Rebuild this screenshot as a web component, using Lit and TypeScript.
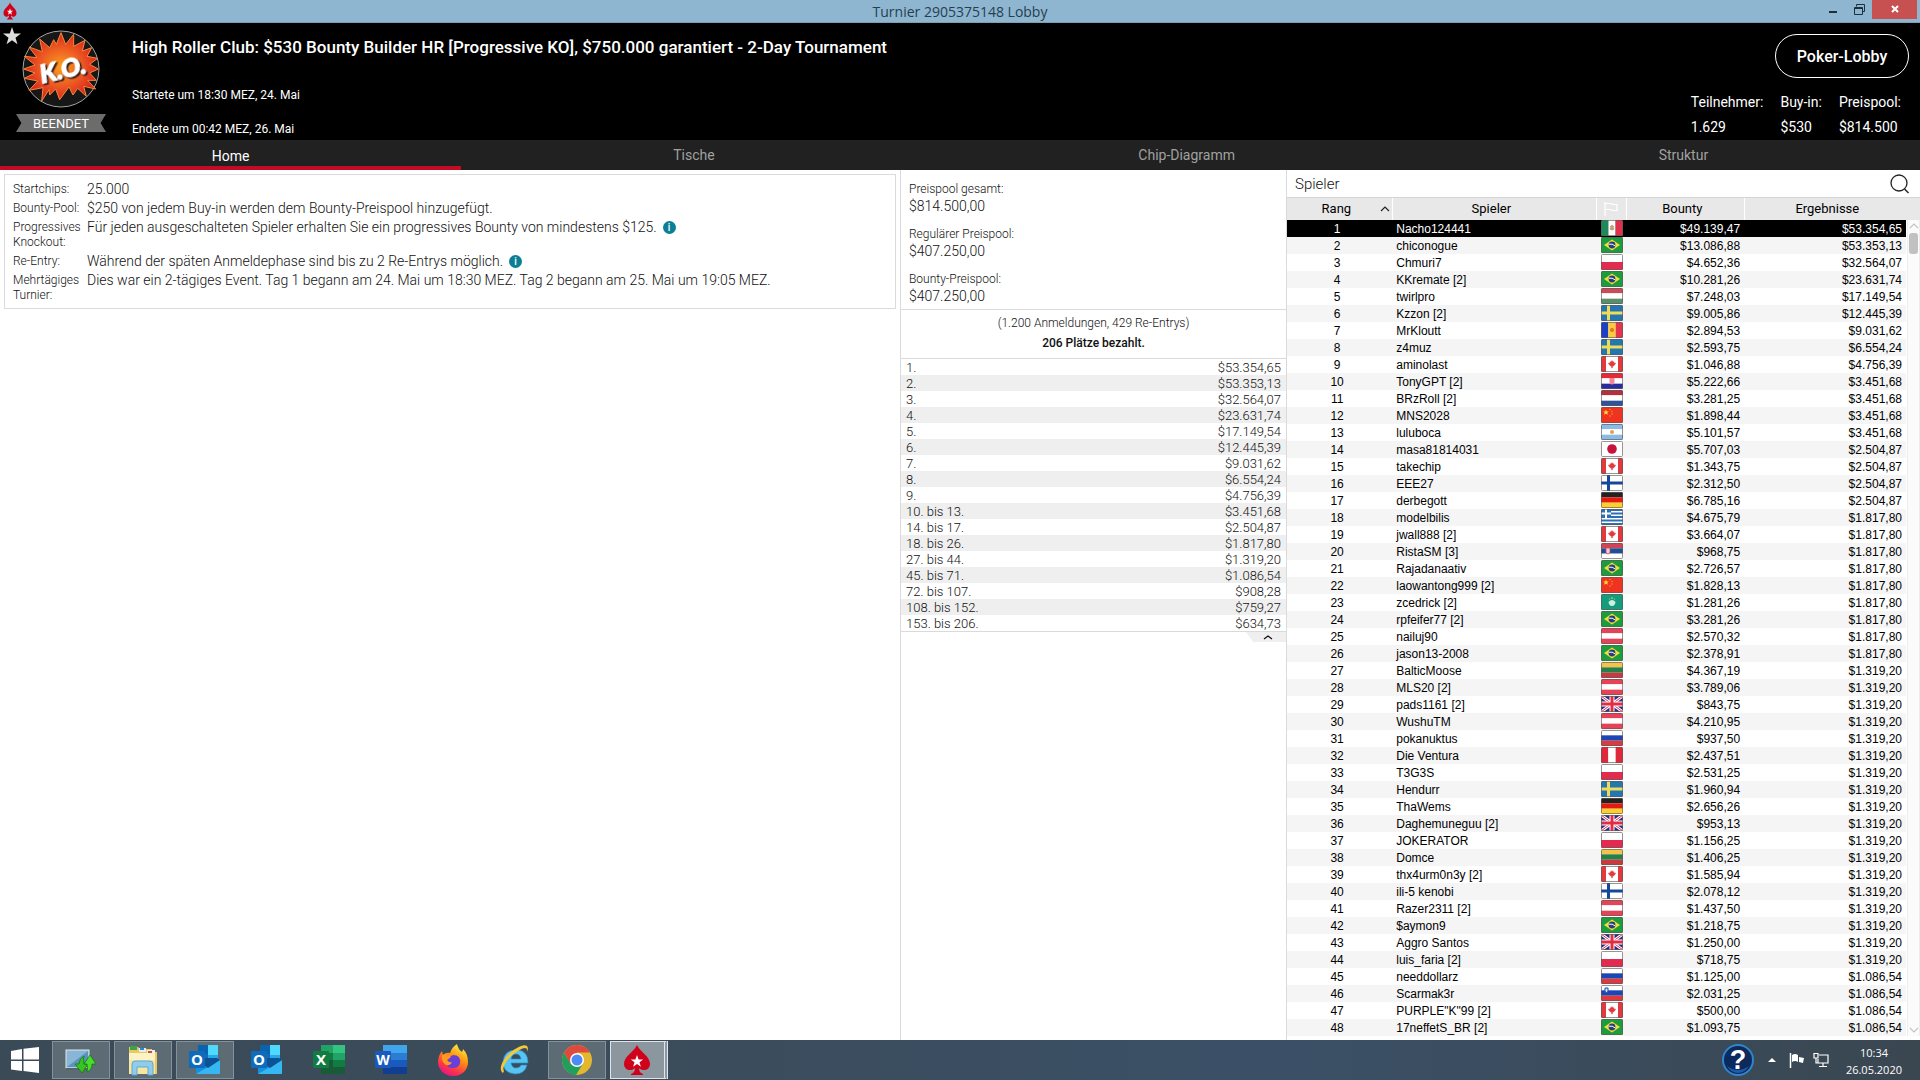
import { LitElement, html, svg, css, nothing } from "lit";
import { customElement, property, state } from "lit/decorators.js";
import { classMap } from "lit/directives/class-map.js";

type Player = [name: string, flag: string, bounty: string, result: string];

const PLAYERS: Player[] = [
  ["Nacho124441", "mx", "$49.139,47", "$53.354,65"],
  ["chiconogue", "br", "$13.086,88", "$53.353,13"],
  ["Chmuri7", "pl", "$4.652,36", "$32.564,07"],
  ["KKremate [2]", "br", "$10.281,26", "$23.631,74"],
  ["twirlpro", "hu", "$7.248,03", "$17.149,54"],
  ["Kzzon [2]", "se", "$9.005,86", "$12.445,39"],
  ["MrKloutt", "md", "$2.894,53", "$9.031,62"],
  ["z4muz", "se", "$2.593,75", "$6.554,24"],
  ["aminolast", "ca", "$1.046,88", "$4.756,39"],
  ["TonyGPT [2]", "hr", "$5.222,66", "$3.451,68"],
  ["BRzRoll [2]", "nl", "$3.281,25", "$3.451,68"],
  ["MNS2028", "cn", "$1.898,44", "$3.451,68"],
  ["luluboca", "ar", "$5.101,57", "$3.451,68"],
  ["masa81814031", "jp", "$5.707,03", "$2.504,87"],
  ["takechip", "ca", "$1.343,75", "$2.504,87"],
  ["EEE27", "fi", "$2.312,50", "$2.504,87"],
  ["derbegott", "de", "$6.785,16", "$2.504,87"],
  ["modelbilis", "gr", "$4.675,79", "$1.817,80"],
  ["jwall888 [2]", "ca", "$3.664,07", "$1.817,80"],
  ["RistaSM [3]", "rs", "$968,75", "$1.817,80"],
  ["Rajadanaativ", "br", "$2.726,57", "$1.817,80"],
  ["laowantong999 [2]", "cn", "$1.828,13", "$1.817,80"],
  ["zcedrick [2]", "mo", "$1.281,26", "$1.817,80"],
  ["rpfeifer77 [2]", "br", "$3.281,26", "$1.817,80"],
  ["nailuj90", "at", "$2.570,32", "$1.817,80"],
  ["jason13-2008", "br", "$2.378,91", "$1.817,80"],
  ["BalticMoose", "lt", "$4.367,19", "$1.319,20"],
  ["MLS20 [2]", "at", "$3.789,06", "$1.319,20"],
  ["pads1161 [2]", "gb", "$843,75", "$1.319,20"],
  ["WushuTM", "at", "$4.210,95", "$1.319,20"],
  ["pokanuktus", "ru", "$937,50", "$1.319,20"],
  ["Die Ventura", "pe", "$2.437,51", "$1.319,20"],
  ["T3G3S", "pl", "$2.531,25", "$1.319,20"],
  ["Hendurr", "se", "$1.960,94", "$1.319,20"],
  ["ThaWems", "de", "$2.656,26", "$1.319,20"],
  ["Daghemuneguu [2]", "gb", "$953,13", "$1.319,20"],
  ["JOKERATOR", "pl", "$1.156,25", "$1.319,20"],
  ["Domce", "lt", "$1.406,25", "$1.319,20"],
  ["thx4urm0n3y [2]", "ca", "$1.585,94", "$1.319,20"],
  ["ili-5 kenobi", "fi", "$2.078,12", "$1.319,20"],
  ["Razer2311 [2]", "at", "$1.437,50", "$1.319,20"],
  ["$aymon9", "br", "$1.218,75", "$1.319,20"],
  ["Aggro Santos", "gb", "$1.250,00", "$1.319,20"],
  ["luis_faria [2]", "pl", "$718,75", "$1.319,20"],
  ["needdollarz", "ru", "$1.125,00", "$1.086,54"],
  ["Scarmak3r", "si", "$2.031,25", "$1.086,54"],
  ['PURPLE"K"99 [2]', "ca", "$500,00", "$1.086,54"],
  ["17neffetS_BR [2]", "br", "$1.093,75", "$1.086,54"],
];

const PAYOUTS: [string, string][] = [
  ["1.", "$53.354,65"],
  ["2.", "$53.353,13"],
  ["3.", "$32.564,07"],
  ["4.", "$23.631,74"],
  ["5.", "$17.149,54"],
  ["6.", "$12.445,39"],
  ["7.", "$9.031,62"],
  ["8.", "$6.554,24"],
  ["9.", "$4.756,39"],
  ["10. bis 13.", "$3.451,68"],
  ["14. bis 17.", "$2.504,87"],
  ["18. bis 26.", "$1.817,80"],
  ["27. bis 44.", "$1.319,20"],
  ["45. bis 71.", "$1.086,54"],
  ["72. bis 107.", "$908,28"],
  ["108. bis 152.", "$759,27"],
  ["153. bis 206.", "$634,73"],
];

const FACTS: [label: string, text: string, info: boolean][] = [
  ["Startchips:", "25.000", false],
  ["Bounty-Pool:", "$250 von jedem Buy-in werden dem Bounty-Preispool hinzugefügt.", false],
  ["Progressives Knockout:", "Für jeden ausgeschalteten Spieler erhalten Sie ein progressives Bounty von mindestens $125.", true],
  ["Re-Entry:", "Während der späten Anmeldephase sind bis zu 2 Re-Entrys möglich.", true],
  ["Mehrtägiges Turnier:", "Dies war ein 2-tägiges Event. Tag 1 begann am 24. Mai um 18:30 MEZ. Tag 2 begann am 25. Mai um 19:05 MEZ.", false],
];

/* ---- flags, drawn on a 22 x 16 field ---- */

const rows = (...c: string[]) =>
  c.map((fill, i) => svg`<rect x="0" y=${(16 / c.length) * i} width="22" height=${16 / c.length} fill=${fill} />`);
const cols = (...c: string[]) =>
  c.map((fill, i) => svg`<rect x=${(22 / c.length) * i} y="0" width=${22 / c.length} height="16" fill=${fill} />`);
const field = (fill: string) => svg`<rect width="22" height="16" fill=${fill} />`;

const FLAGS: Record<string, unknown> = {
  mx: svg`${cols("#1d8a5c", "#fff", "#e0304a")}<path d="M9 8a2 2 0 0 0 4 0M9 7l2-2 2 2-2 1z" fill="#c2a57b" stroke="#a98a5c" stroke-width=".6" />`,
  br: svg`${field("#1d9c3d")}<path d="M11 2.500 19 8l-8 5.500L3 8z" fill="#f4dc3a" /><circle cx="11" cy="8" r="3.400" fill="#24407c" /><path d="M7.800 7.200q3.500-.8 6.300 1.700" stroke="#fff" fill="none" />`,
  pl: rows("#fff", "#e32b50"),
  hu: rows("#cd4a5a", "#fff", "#5a9069"),
  se: svg`${field("#2477ae")}<path d="M7.500 0v16M0 8h22" stroke="#f1da5a" stroke-width="3" />`,
  md: svg`${cols("#1c3fc4", "#fccb3c", "#e2344c")}<circle cx="11" cy="8" r="2" fill="#d8742c" />`,
  ca: svg`${field("#fff")}<rect width="5" height="16" fill="#e03a3e" /><rect x="17" width="5" height="16" fill="#e03a3e" /><path d="m11 4.500 1 1.600 1-.4-.2 1.500 1.700-.2-.5 1.500-2 1.700h-.7V12h-.6v-1.800H10L8 8.500 7.500 7l1.700.2L9 5.700l1 .4z" fill="#e03a3e" stroke="#e03a3e" stroke-width=".5" />`,
  hr: svg`${rows("#e32a36", "#fff", "#2a2c9c")}<path d="M8.500 5h5v4q0 2.500-2.500 2.500T8.500 9z" fill="#f0889c" />`,
  nl: rows("#b5303f", "#fff", "#2f549c"),
  cn: svg`${field("#ee3420")}<path d="m5 2.500.8 1.900 2 .1-1.500 1.300.5 2L5 6.700 3.200 7.800l.5-2-1.500-1.300 2-.1z" fill="#fcd832" /><g fill="#f7a52b"><circle cx="9" cy="2.500" r=".7" /><circle cx="11" cy="4.500" r=".7" /><circle cx="11" cy="7" r=".7" /><circle cx="9" cy="9" r=".7" /></g>`,
  ar: svg`${rows("#8cbce6", "#fff", "#8cbce6")}<circle cx="11" cy="8" r="2" fill="#e5a14a" />`,
  jp: svg`${field("#fff")}<circle cx="11" cy="8" r="4.800" fill="#c8143c" />`,
  fi: svg`${field("#fff")}<path d="M7.500 0v16M0 8h22" stroke="#14489c" stroke-width="3" />`,
  de: rows("#222", "#e01c10", "#fcd02c"),
  gr: svg`${field("#fff")}<path d="M0 1h22M0 4.500h22M0 8h22M0 11.500h22M0 15h22" stroke="#2c70b4" stroke-width="1.800" /><rect width="10" height="9" fill="#2c70b4" /><path d="M5 0v9M0 4.500h10" stroke="#fff" stroke-width="2" />`,
  rs: svg`${rows("#cf4456", "#1f4e94", "#fff")}<path d="M5 5h4v4q0 2-2 2T5 9z" fill="#e4d4dc" stroke="#cf4456" stroke-width=".8" />`,
  mo: svg`${field("#159c7c")}<path d="M7.500 8q3.500-4 7 0-.5 4-3.500 4T7.500 8z" fill="#d2eee4" /><circle cx="11" cy="4" r=".8" fill="#e8e070" /><circle cx="8.500" cy="5" r=".5" fill="#e8e070" /><circle cx="13.500" cy="5" r=".5" fill="#e8e070" />`,
  at: rows("#e54458", "#fff", "#e54458"),
  lt: rows("#f5c24a", "#26804a", "#c83a40"),
  gb: svg`${field("#2c2b86")}<path d="m0 0 22 16M22 0 0 16" stroke="#fff" stroke-width="3" /><path d="m0 0 22 16M22 0 0 16" stroke="#e22c44" stroke-width="1" /><path d="M11 0v16M0 8h22" stroke="#fff" stroke-width="5" /><path d="M11 0v16M0 8h22" stroke="#e22c44" stroke-width="3" />`,
  ru: rows("#fff", "#1c46b4", "#dc3a3c"),
  pe: cols("#e0283c", "#fff", "#e0283c"),
  si: svg`${rows("#fff", "#1c46b4", "#dc3a3c")}<path d="M4 3h3v3q0 1.500-1.500 1.500T4 6z" fill="#dce8f8" stroke="#1c46b4" />`,
};

@customElement("country-flag")
export class CountryFlag extends LitElement {
  @property() code = "";

  static styles = css`
    :host { display: block; width: 22px; height: 16px; margin: 0 auto; }
    .flag { display: block; width: 22px; height: 16px; }
    .edge { fill: none; stroke: #5f5a5a; stroke-opacity: 0.65; }
  `;

  render() {
    return html`<svg class="flag" viewBox="0 0 22 16" aria-hidden="true">
      <clipPath id="r"><rect width="22" height="16" rx="1.500" /></clipPath>
      <g clip-path="url(#r)">${FLAGS[this.code] ?? nothing}</g>
      <rect class="edge" x=".5" y=".5" width="21" height="15" rx="1" />
    </svg>`;
  }
}

/* ---- icons ---- */

const SPADE = svg`<path d="M16 1C13 8 3 12 3 20c0 6 7 8 11 4 0 3-1 5-4 6v1h12v-1c-3-1-4-3-4-6 4 4 11 2 11-4 0-8-10-12-13-19z" fill="#d0021b" /><path d="m16 11 1.600 4.400h4.600l-3.700 2.800 1.400 4.500-3.900-2.700-3.900 2.700 1.400-4.500-3.700-2.800h4.600z" fill="#fff" />`;

const outlook = svg`
  <rect x="9" y="1" width="20" height="19" fill="#0f6cbd" /><rect x="19" y="1" width="10" height="10" fill="#50d9ff" /><rect x="9" y="1" width="10" height="9" fill="#0a64ad" /><rect x="19" y="11" width="10" height="9" fill="#28a8ea" />
  <path d="M7 17 31 17v12q0 1-1 1H8q-1 0-1-1z" fill="#1490df" /><path d="M7 30 31 16v13q0 1-1 1z" fill="#35b8f1" /><path d="m7 16 12 8 12-8-3-2H9z" fill="#0c5396" />
  <rect x="0" y="7" width="16" height="17" rx="1" fill="#0f6cbd" /><text class="glyph" x="8" y="21" font-size="15">O</text>`;

const TASKS: { name: string; state: string; art: unknown }[] = [
  {
    name: "Dateisynchronisierung", state: "open",
    art: svg`<rect x="1" y="6" width="23" height="18" fill="#88b6d4" stroke="#dde8ee" /><path d="M2 23 23 7v16z" fill="#5b93bc" /><rect x="1" y="24" width="23" height="2" fill="#56636d" /><path d="M10 20h4q0-5 5-8-1 3 0 8h4l-6 9z" fill="#36c422" stroke="#147a10" stroke-width=".8" /><path d="m25 11 6 9h-4q0 6-5 8 1-3 0-8h-3z" fill="#4cdc30" stroke="#147a10" stroke-width=".8" />`,
  },
  {
    name: "Explorer", state: "open",
    art: svg`<path d="M2 3h9l2 2h12v3h5v22H2z" fill="#e9c866" /><path d="M3 2h7v4H3z" fill="#3ba547" /><path d="M12 4h7v4h-7z" fill="#e9eef2" /><path d="M13 4h4v2h-4z" fill="#2789d0" /><path d="M20 6h8v4h-8z" fill="#eee" /><path d="M21 7h4v2h-4z" fill="#d3483c" /><path d="M2 9h26v21H2z" fill="#f8e6a0" /><path d="M2 9h26v7H2z" fill="#fdf2c2" /><path d="M5 31V20q0-3 3-3h15q3 0 3 3v11h-5v-8H10v8z" fill="#90cdec" stroke="#5ba8d4" />`,
  },
  { name: "Outlook", state: "open", art: outlook },
  { name: "Outlook-Kalender", state: "", art: outlook },
  {
    name: "Excel", state: "",
    art: svg`<path d="M8 1h12v8H8z" fill="#21a366" /><path d="M20 1h12v8H20z" fill="#33c481" /><path d="M8 9h12v7H8z" fill="#107c41" /><path d="M20 9h12v7H20z" fill="#21a366" /><path d="M8 16h12v14H8z" fill="#185c37" /><path d="M20 16h12v7H20z" fill="#107c41" /><path d="M20 23h12v7H20z" fill="#185c37" /><rect y="7" width="16" height="17" rx="1" fill="#107c41" /><text class="glyph" x="8" y="21" font-size="15">X</text>`,
  },
  {
    name: "Word", state: "",
    art: svg`<path d="M8 1h24v8H8z" fill="#41a5ee" /><path d="M8 9h24v7H8z" fill="#2b7cd3" /><path d="M8 16h24v7H8z" fill="#185abd" /><path d="M8 23h24v7H8z" fill="#103f91" /><rect y="7" width="16" height="17" rx="1" fill="#185abd" /><text class="glyph" x="8" y="21" font-size="14">W</text>`,
  },
  {
    name: "Firefox", state: "",
    art: svg`<defs><linearGradient id="ff" x1=".8" y1="0" x2=".3" y2="1"><stop offset="0" stop-color="#fff44f" /><stop offset=".4" stop-color="#ff980e" /><stop offset=".75" stop-color="#ff3647" /><stop offset="1" stop-color="#e31587" /></linearGradient></defs>
      <path d="M20 0q1 5 5 8 1-2 1-3 5 5 5 13c0 8-6 14-15 14S1 25 1 18q0-6 4-11l1 4q3-3 7-2 2-6 7-9z" fill="url(#ff)" /><path d="M16 11q8 0 7 8-1 5-7 5t-7-5q0-5 7-8z" fill="#6a3fd8" /><path d="M5 11q5-2 9 2l-4 3q2 3 5 2-2 4-6 3-5-3-4-10z" fill="#ff9b1c" />`,
  },
  {
    name: "Internet Explorer", state: "",
    art: svg`<path d="M29 19H12q1 5 5 5 4 0 5-3h6q-2 9-12 9Q4 29 4 18 5 6 17 6q12 0 12 13zM12 15h10q-1-5-5-5t-5 5z" fill="#58c4f2" stroke="#2a8fd0" stroke-width=".7" /><path d="M4 29C-3 24 8 9 18 4c8-5 13-3 10 4 1-5-3-5-9-1C10 12 2 23 5 27z" fill="#f5c83a" />`,
  },
  {
    name: "Chrome", state: "open",
    art: svg`<circle cx="16" cy="16" r="15" fill="#e3b82f" /><path d="M16 16 3 8.500A15 15 0 0 1 29 8.500H16z" fill="#dc4b3e" /><path d="M3 8.500 9.700 20 16 22.500 15 31A15 15 0 0 1 3 8.500z" fill="#1f9f5b" /><path d="M3 8.500 9.500 20l6-12z" fill="#dc4b3e" /><path d="m22 19.500-7 11.500-1-9z" fill="#1f9f5b" /><circle cx="16" cy="16" r="7" fill="#fff" /><circle cx="16" cy="16" r="5.500" fill="#4c8bf5" />`,
  },
  { name: "PokerStars", state: "active", art: SPADE },
];

@customElement("window-titlebar")
export class WindowTitlebar extends LitElement {
  static styles = css`
    :host { display: block; font-family: "Open Sans", "Noto Sans", sans-serif; }
    .bar { display: grid; grid-template-columns: 1fr auto 1fr; height: 23px; background: #8fb6d0; border-bottom: 1px solid #7d9fb6; box-sizing: border-box; }
    .mark { display: block; width: 16px; height: 18px; margin: 2px; }
    .title { margin: 0; font-size: 14px; font-weight: 400; line-height: 23px; color: #24404f; }
    .controls { display: flex; justify-content: flex-end; padding-right: 3px; }
    .ctl { display: flex; align-items: center; justify-content: center; box-sizing: border-box; width: 26px; height: 19px; padding: 0 0 2px; border: 0; background: none; }
    .close { width: 45px; background: #c75050; }
    .ctl svg { display: block; width: 12px; height: 12px; }
  `;

  render() {
    return html`<div class="bar">
      <svg class="mark" viewBox="0 0 32 32" preserveAspectRatio="none" aria-hidden="true">${SPADE}</svg>
      <h1 class="title">Turnier 2905375148 Lobby</h1>
      <div class="controls">
        <button class="ctl" aria-label="Minimieren"><svg viewBox="0 0 12 12"><path d="M2 8h8v2H2z" fill="#1c2f3a" /></svg></button>
        <button class="ctl" aria-label="Wiederherstellen"><svg viewBox="0 0 12 12"><path d="M3.500 3.500v-2h8v7h-2M1.500 4.500h8v7h-8zM1.500 5.500h8" fill="none" stroke="#1c2f3a" /></svg></button>
        <button class="ctl close" aria-label="Schließen"><svg viewBox="0 0 12 12"><path d="m3 3 6 6m0-6L3 9" stroke="#fff" stroke-width="2" /></svg></button>
      </div>
    </div>`;
  }
}

@customElement("tournament-header")
export class TournamentHeader extends LitElement {
  static styles = css`
    :host { display: block; }
    .head { position: relative; display: flex; height: 117px; background: #000; color: #fff; }
    .star { position: absolute; left: 3px; top: 4px; width: 18px; height: 18px; padding: 0; border: 0; background: none; }
    .star svg { display: block; width: 18px; height: 18px; }
    .badge { display: flex; flex-direction: column; align-items: center; gap: 6px; width: 90px; padding: 7px 26px 0 16px; }
    .logo { width: 78px; height: 78px; display: block; }
    .ko { font: italic 900 76px "Lato", "Open Sans", sans-serif; fill: #fff; stroke: #fff; stroke-width: 4px; filter: drop-shadow(4px 5px 0 #2a1414); }
    .ribbon { width: 90px; height: 18px; background: #6c6c6c; clip-path: polygon(0 0, 100% 0, 94% 50%, 100% 100%, 0 100%, 6% 50%); font-size: 13px; line-height: 19px; text-align: center; }
    .info { flex: 1; display: flex; flex-direction: column; padding-top: 12px; }
    .name { margin: 0 0 24px; font-size: 17px; font-weight: 500; line-height: 24px; }
    .when { margin: 0 0 10px; font-size: 12px; line-height: 24px; }
    .side { display: flex; flex-direction: column; align-items: flex-end; padding: 11px 11px 0 0; }
    .lobby { width: 134px; height: 44px; border: 1px solid #fff; border-radius: 22px; background: #000; color: #fff; font: 500 16px Roboto, sans-serif; }
    .stats { display: flex; gap: 17px; margin: 12px 8px 0 0; font-size: 14px; line-height: 25px; }
    .stats dt, .stats dd { margin: 0; }
  `;

  render() {
    return html`<header class="head">
      <button class="star" aria-label="Favorit"><svg viewBox="0 0 18 18"><path d="m9 0 2.200 6.500H18l-5.500 4.200 2 6.600L9 13.300l-5.500 4 2-6.600L0 6.500h6.800z" fill="#ddd" /></svg></button>
      <div class="badge">
        <svg class="logo" viewBox="65 91 234 234" aria-label="K.O.">
          <defs><radialGradient id="boom"><stop offset="0" stop-color="#fb9f1e" /><stop offset=".5" stop-color="#ee6222" /><stop offset="1" stop-color="#dc2420" /></radialGradient></defs>
          <circle cx="182" cy="208" r="114" fill="#171717" stroke="#a4a4a4" stroke-width="3" />
          <path d="M182 99 196 134 220 104 220 140 254 122 246 154 274 144 260 170 292 176 268 194 294 208 268 220 288 242 262 242 286 268 250 260 258 290 232 266 218 286 206 262 178 300 166 268 148 286 146 270 124 304 128 264 86 272 112 244 72 236 104 220 70 208 104 196 72 170 110 174 86 142 126 156 118 118 148 144 160 120 168 134z" fill="url(#boom)" stroke="#f48a34" stroke-width="3" />
          <text class="ko" x="117" y="237" transform="rotate(-13 182 208)">K.O.</text>
        </svg>
        <div class="ribbon">BEENDET</div>
      </div>
      <div class="info">
        <h2 class="name">High Roller Club: $530 Bounty Builder HR [Progressive KO], $750.000 garantiert - 2-Day Tournament</h2>
        <p class="when">Startete um 18:30 MEZ, 24. Mai</p>
        <p class="when">Endete um 00:42 MEZ, 26. Mai</p>
      </div>
      <div class="side">
        <button class="lobby">Poker-Lobby</button>
        <dl class="stats">
          <div><dt>Teilnehmer:</dt><dd>1.629</dd></div>
          <div><dt>Buy-in:</dt><dd>$530</dd></div>
          <div><dt>Preispool:</dt><dd>$814.500</dd></div>
        </dl>
      </div>
    </header>`;
  }
}

@customElement("player-list")
export class PlayerList extends LitElement {
  @state() private selected = 0;

  static styles = css`
    :host { display: block; }
    .top { display: flex; align-items: center; justify-content: space-between; height: 27px; padding: 0 10px 0 8px; border-bottom: 1px solid #d4d4d4; }
    .heading { margin: 0; font-size: 15px; font-weight: 300; color: #111; }
    .search { width: 20px; height: 22px; padding: 0; border: 0; background: none; }
    .search svg { display: block; width: 20px; height: 20px; }
    .body { display: flex; }
    .table { flex: 1; border-collapse: collapse; table-layout: fixed; width: 100%; color: #000; }
    .rank { width: 17%; }
    .name { width: 33%; }
    .flag { width: 30px; }
    .bounty { width: 19%; }
    th { height: 22px; padding: 0 0 1px; box-sizing: border-box; background: #e8e8e8; border-right: 1px solid #fff; font: 400 13px/21px Roboto, sans-serif; }
    th.name, th.bounty { padding-right: 6px; }
    th:last-child { border-right: 0; padding-left: 4px; }
    .sort { display: grid; grid-template-columns: 1fr auto 1fr; align-items: center; width: 100%; height: 21px; padding: 0 2px; border: 0; background: none; color: #000; font: 400 13px Roboto, sans-serif; }
    .sort span { grid-column: 2; padding-right: 6px; }
    .sort svg { display: block; justify-self: end; width: 10px; height: 8px; }
    .pennant { display: block; width: 14px; height: 14px; margin: 0 auto; }
    td { height: 17px; box-sizing: border-box; padding: 1px 0 0; font: 12px/16px "Liberation Sans", Arial, sans-serif; white-space: nowrap; }
    td.f { padding: 0 0 1px 1px; }
    tbody tr:nth-child(even) { background: #f5f5f5; }
    tbody tr.on { background: #000; color: #fff; }
    td.c { text-align: center; padding-right: 5px; }
    td.n { padding-left: 4px; }
    td.m { text-align: right; padding-right: 4px; }
    .scroll { display: flex; flex-direction: column; width: 14px; }
    .cap { height: 22px; background: #e8e8e8; }
    .track { flex: 1; display: flex; flex-direction: column; align-items: center; gap: 2px; margin-left: 1px; padding: 1px 0; border: 1px solid #ececec; border-width: 0 1px; background: #fbfbfb; }
    .track svg { width: 10px; height: 10px; }
    .thumb { width: 9px; height: 21px; border-radius: 3px; background: #c1c1c1; }
    .down { margin-top: auto; }
  `;

  render() {
    return html`
      <div class="top">
        <h3 class="heading">Spieler</h3>
        <button class="search" aria-label="Spieler suchen"><svg viewBox="0 0 20 20"><circle cx="9" cy="9" r="8" fill="none" stroke="#222" stroke-width="1.300" /><path d="m14.500 15 4 4" stroke="#222" stroke-width="1.500" /></svg></button>
      </div>
      <div class="body">
        <table class="table">
          <thead>
            <tr>
              <th class="rank"><button class="sort"><span>Rang</span><svg viewBox="0 0 10 8"><path d="m1 6 4-4 4 4" fill="none" stroke="#222" stroke-width="1.200" /></svg></button></th>
              <th class="name">Spieler</th>
              <th class="flag" aria-label="Land"><svg class="pennant" viewBox="0 0 14 14"><path d="M1 0v14M1 1.500h6l1 1h5v6H8l-1-1H1" fill="none" stroke="#fff" stroke-width="1.200" /></svg></th>
              <th class="bounty">Bounty</th>
              <th>Ergebnisse</th>
            </tr>
          </thead>
          <tbody>
            ${PLAYERS.map(([name, flag, bounty, result], i) => html`
              <tr class=${classMap({ on: i === this.selected })} @click=${() => (this.selected = i)}>
                <td class="c">${i + 1}</td>
                <td class="n">${name}</td>
                <td class="f"><country-flag code=${flag}></country-flag></td>
                <td class="m">${bounty}</td>
                <td class="m">${result}</td>
              </tr>`)}
          </tbody>
        </table>
        <div class="scroll" aria-hidden="true">
          <div class="cap"></div>
          <div class="track">
            <svg viewBox="0 0 10 10"><path d="m1 7 4-4 4 4" fill="none" stroke="#c4c4c4" stroke-width="1.200" /></svg>
            <div class="thumb"></div>
            <svg class="down" viewBox="0 0 10 10"><path d="m1 3 4 4 4-4" fill="none" stroke="#c4c4c4" stroke-width="1.200" /></svg>
          </div>
        </div>
      </div>`;
  }
}

@customElement("task-bar")
export class TaskBar extends LitElement {
  static styles = css`
    :host { display: block; font-family: "Open Sans", "Noto Sans", sans-serif; }
    .bar { display: flex; align-items: center; height: 40px; background: linear-gradient(90deg, #3a4a57, #3b4c5b 35%, #3b5067 66%, #3a4751); color: #fff; }
    button { padding: 0; border: 0; background: none; color: inherit; }
    .start { display: flex; align-items: center; justify-content: center; width: 50px; height: 40px; }
    .start svg { width: 28px; height: 26px; }
    .tasks { display: flex; gap: 4px; padding-left: 2px; }
    .task { display: flex; align-items: center; justify-content: center; box-sizing: border-box; width: 58px; height: 38px; border: 1px solid transparent; }
    .task svg { display: block; width: 32px; height: 32px; }
    .task.open { border-color: #84919a; background: #5d6b75; }
    .task.active { padding-right: 2px; border-color: #dfe5e9; border-right-width: 4px; border-right-style: double; background: #8b969e; }
    .glyph { fill: #fff; font-family: "Open Sans", sans-serif; font-weight: 700; text-anchor: middle; }
    .tray { display: flex; align-items: center; margin-left: auto; padding-right: 18px; }
    .tray button { display: flex; }
    .help { margin-right: 12px; }
    .help svg { width: 32px; height: 32px; }
    .q { font: 700 27px "Liberation Sans", Arial, sans-serif; fill: #fff; text-anchor: middle; }
    .up { margin-right: 11px; }
    .up svg { width: 12px; height: 12px; }
    .small svg { width: 16px; height: 16px; }
    .small { margin-right: 8px; }
    .clock { margin-left: 9px; padding-top: 2px; font-size: 11px; line-height: 17px; text-align: center; }
  `;

  render() {
    return html`<footer class="bar">
      <button class="start" aria-label="Start"><svg viewBox="0 0 28 26"><path d="m0 4 11-2v10.500H0zM12.500 1.700 28 0v12.500H12.500zM0 14h11v10L0 22.500zM12.500 14H28v12l-15.500-2z" fill="#fff" /></svg></button>
      <div class="tasks">
        ${TASKS.map((t) => html`<button class="task ${t.state}" aria-label=${t.name}><svg viewBox="0 0 32 32">${t.art}</svg></button>`)}
      </div>
      <div class="tray">
        <button class="help" aria-label="Hilfe"><svg viewBox="0 0 32 32"><circle cx="16" cy="16" r="15" fill="#0c2a5c" stroke="#2f86cc" stroke-width="2" /><path d="M5 22q11 8 22 0-4 7-11 7T5 22z" fill="#1c5ca8" /><text class="q" x="16" y="25">?</text></svg></button>
        <button class="up" aria-label="Ausgeblendete Symbole"><svg viewBox="0 0 12 12"><path d="M2 8h8L6 4z" fill="#fff" /></svg></button>
        <button class="small" aria-label="Wartungscenter"><svg viewBox="0 0 16 16"><path d="M1.500 1v15" stroke="#fff" stroke-width="1.500" /><path d="M3 3q3-2 6 0v7q-3-2-6 0zM10 5l5 1-1 5-4-1z" fill="#fff" /></svg></button>
        <button class="small" aria-label="Netzwerk"><svg viewBox="0 0 16 16"><path d="M6 3h9v8H5V7M10 11v3M6 14.500h8M1 1.500h4V6H1zM3 6v5h2" fill="none" stroke="#fff" stroke-width="1.200" /></svg></button>
        <time class="clock" datetime="2020-05-26T10:34">10:34<br />26.05.2020</time>
      </div>
    </footer>`;
  }
}

@customElement("app-root")
export class AppRoot extends LitElement {
  @state() private tab = "Home";

  static styles = css`
    :host { display: flex; flex-direction: column; min-height: 100vh; background: #fff; font-family: Roboto, "Open Sans", sans-serif; color: #111; }
    .tabs { display: flex; background: #212121; }
    .tab { flex: 1 1 auto; box-sizing: border-box; height: 30px; border-bottom: 4px solid transparent; color: #a0a0a0; font-size: 14px; line-height: 31px; text-align: center; text-decoration: none; }
    .tab.on { border-bottom-color: #c20c26; color: #fff; line-height: 32px; }
    .main { flex: 1; display: grid; grid-template-columns: 900fr 387fr 633fr; }
    .main > * { min-width: 0; }
    .facts-pane { padding: 4px; }
    .facts { display: grid; grid-template-columns: 74px 1fr; row-gap: 4px; margin: 0; padding: 7px 8px 5px; border: 1px solid #dadada; font-weight: 300; line-height: 15px; }
    .facts dt { font-size: 12px; }
    .facts dd { display: flex; align-items: center; gap: 6px; height: 15px; margin: 0; font-size: 14px; }
    .hint { width: 13px; height: 13px; padding: 0; border: 0; border-radius: 50%; background: #0b7f96; color: #fff; font: 500 10px/13px Roboto, sans-serif; }
    .prizes { border: 1px solid #dadada; border-width: 0 1px; font-weight: 300; }
    .pools { margin: 0; padding: 10px 8px 4px; border-bottom: 1px solid #dadada; }
    .pools dt { font-size: 12px; line-height: 18px; }
    .pools dd { margin: 0 0 10px; font-size: 14px; line-height: 17px; }
    .pools dd:last-child { margin: 0; }
    .entries { padding: 3px 0 5px; border-bottom: 1px solid #dadada; font-size: 12px; line-height: 20px; text-align: center; }
    .entries p { margin: 0; }
    .paid { font-weight: 500; }
    .payouts { width: 100%; border-collapse: collapse; border-bottom: 1px solid #dadada; font-size: 13px; }
    .payouts td { height: 16px; box-sizing: border-box; padding: 1px 5px 0; line-height: 15px; }
    .payouts td:last-child { text-align: right; }
    .payouts tr:nth-child(even) { background: #efefef; }
    .fold { display: block; width: 40px; height: 10px; margin-left: auto; padding: 0 0 0 4px; border: 0; background: #efefef; clip-path: polygon(0 0, 100% 0, 100% 100%, 18% 100%); }
    .fold svg { display: block; width: 10px; height: 8px; margin: 0 auto; }
  `;

  render() {
    return html`
      <window-titlebar></window-titlebar>
      <tournament-header></tournament-header>
      <nav class="tabs">
        ${["Home", "Tische", "Chip-Diagramm", "Struktur"].map((t) => html`<a
          href="#${t}"
          class=${classMap({ tab: true, on: t === this.tab })}
          @click=${(e: Event) => { e.preventDefault(); this.tab = t; }}
        >${t}</a>`)}
      </nav>
      <main class="main">
        <section class="facts-pane">
          <dl class="facts">
            ${FACTS.map(([label, text, info]) => html`
              <dt>${label}</dt>
              <dd>${text}${info ? html`<button class="hint" aria-label="Info">i</button>` : nothing}</dd>`)}
          </dl>
        </section>
        <section class="prizes">
          <dl class="pools">
            <dt>Preispool gesamt:</dt><dd>$814.500,00</dd>
            <dt>Regulärer Preispool:</dt><dd>$407.250,00</dd>
            <dt>Bounty-Preispool:</dt><dd>$407.250,00</dd>
          </dl>
          <div class="entries">
            <p>(1.200 Anmeldungen, 429 Re-Entrys)</p>
            <p class="paid">206 Plätze bezahlt.</p>
          </div>
          <table class="payouts">
            <tbody>${PAYOUTS.map(([place, sum]) => html`<tr><td>${place}</td><td>${sum}</td></tr>`)}</tbody>
          </table>
          <button class="fold" aria-label="Einklappen"><svg viewBox="0 0 10 8"><path d="m1 6 4-3 4 3" fill="none" stroke="#111" stroke-width="1.200" /></svg></button>
        </section>
        <player-list></player-list>
      </main>
      <task-bar></task-bar>`;
  }
}
